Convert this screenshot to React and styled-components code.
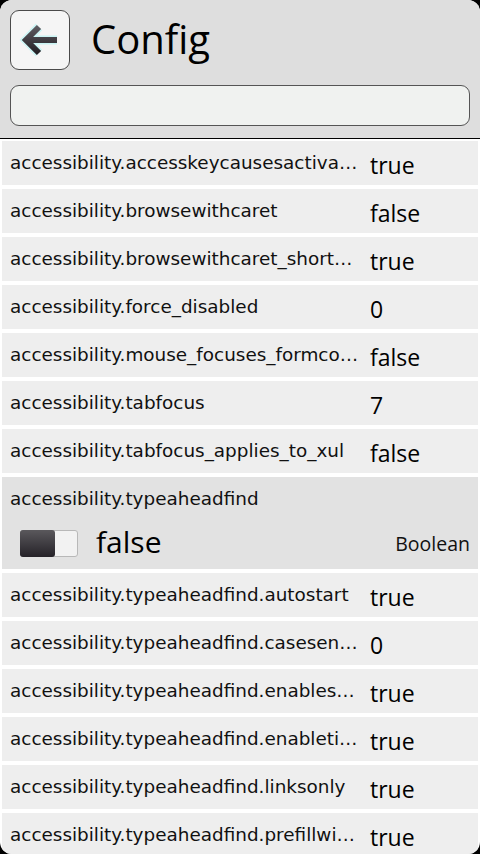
import React from 'react';
import styled, { createGlobalStyle } from 'styled-components';

const prefs = [
  { name: 'accessibility.accesskeycausesactivation', value: 'true' },
  { name: 'accessibility.browsewithcaret', value: 'false' },
  { name: 'accessibility.browsewithcaret_shortcut.enabled', value: 'true' },
  { name: 'accessibility.force_disabled', value: '0' },
  { name: 'accessibility.mouse_focuses_formcontrol', value: 'false' },
  { name: 'accessibility.tabfocus', value: '7' },
  { name: 'accessibility.tabfocus_applies_to_xul', value: 'false' },
  { name: 'accessibility.typeaheadfind', value: 'false', type: 'Boolean', open: true },
  { name: 'accessibility.typeaheadfind.autostart', value: 'true' },
  { name: 'accessibility.typeaheadfind.casesensitive', value: '0' },
  { name: 'accessibility.typeaheadfind.enablesound', value: 'true' },
  { name: 'accessibility.typeaheadfind.enabletimeout', value: 'true' },
  { name: 'accessibility.typeaheadfind.linksonly', value: 'true' },
  { name: 'accessibility.typeaheadfind.prefillwithselection', value: 'true' },
];

const GlobalStyle = createGlobalStyle`
  html, body {
    margin: 0;
    padding: 0;
    background: #000;
  }
  body {
    font-family: "DejaVu Sans", "Liberation Sans", sans-serif;
  }
`;

const Frame = styled.div`
  width: 480px;
  height: 854px;
  overflow: hidden;
  border-radius: 12px;
  background: #fff;
  display: flex;
  flex-direction: column;
`;

const Header = styled.div`
  background: #dedede;
  padding: 10px 10px 12px;
  border-bottom: 1px solid #000;
  display: flex;
  flex-direction: column;
  gap: 15px;
`;

const TitleBar = styled.div`
  display: flex;
  align-items: center;
  gap: 21px;
`;

const BackButton = styled.button`
  width: 60px;
  height: 60px;
  padding: 0;
  border: 1px solid #4a4a4a;
  border-radius: 9px;
  background: #f5f5f5;
  display: flex;
  align-items: center;
  justify-content: center;
`;

const Title = styled.h1`
  margin: 0;
  font-family: "Open Sans", "DejaVu Sans", sans-serif;
  font-weight: 400;
  font-size: 40px;
  color: #000;
  line-height: 1;
  padding-bottom: 2px;
`;

const Search = styled.input`
  height: 41px;
  box-sizing: border-box;
  border: 1px solid #555;
  border-radius: 9px;
  background: #f0f2f0;
  outline: none;
`;

const List = styled.div`
  padding: 2px;
  display: flex;
  flex-direction: column;
  gap: 4px;
`;

const Row = styled.div`
  background: ${p => (p.$open ? '#e2e2e2' : '#eeeeee')};
  display: flex;
  flex-direction: ${p => (p.$open ? 'column' : 'row')};
  align-items: ${p => (p.$open ? 'stretch' : 'center')};
  height: ${p => (p.$open ? '92px' : '44px')};
  padding: ${p => (p.$open ? '11px 8px 0' : '1px 0 0 8px')};
  box-sizing: border-box;
`;

const Key = styled.div`
  flex: ${p => (p.$open ? 'none' : '1')};
  min-width: 0;
  font-size: 18.4px;
  line-height: 22px;
  color: #111;
  white-space: nowrap;
  overflow: hidden;
  text-overflow: ellipsis;
  padding-bottom: 2px;
`;

const Value = styled.div`
  width: 108px;
  flex-shrink: 0;
  margin-left: 10px;
  font-family: "Open Sans", "DejaVu Sans", sans-serif;
  font-size: 23px;
  color: #000;
  padding-top: 3px;
`;

const EditLine = styled.div`
  display: flex;
  align-items: center;
  height: 30px;
  margin-top: 16px;
  padding-left: 10px;
`;

const Toggle = styled.div`
  width: 58px;
  height: 27px;
  box-sizing: border-box;
  border: 1px solid #b8b8b8;
  border-radius: 3px;
  background: #f2f2f2;
  display: flex;
`;

const Knob = styled.div`
  width: 35px;
  margin: -1px;
  border-radius: 3px;
  background: linear-gradient(#5a585c, #252228);
`;

const BigValue = styled.div`
  font-family: "Open Sans", "DejaVu Sans", sans-serif;
  font-size: 30px;
  line-height: 30px;
  color: #000;
  margin-left: 18px;
  flex: 1;
  padding-bottom: 2px;
`;

const TypeLabel = styled.div`
  font-family: "Open Sans", "DejaVu Sans", sans-serif;
  font-size: 19.5px;
  color: #111;
`;

const BackArrow = () => (
  <svg width="42" height="36" viewBox="0 0 42 36">
    <defs>
      <linearGradient id="ag" x1="0" y1="0" x2="0" y2="1">
        <stop offset="0" stopColor="#5c5a60" />
        <stop offset="1" stopColor="#242126" />
      </linearGradient>
    </defs>
    <path
      d="M20 5 L7 18 L20 31 M8 18 H38"
      fill="none"
      stroke="#9ff4f4"
      strokeWidth="9"
      strokeLinejoin="miter"
      opacity="0.5"
    />
    <path
      d="M20 5 L7 18 L20 31 M8 18 H38"
      fill="none"
      stroke="url(#ag)"
      strokeWidth="6"
      strokeLinejoin="miter"
    />
  </svg>
);

export default function App() {
  return (
    <>
      <GlobalStyle />
      <Frame>
        <Header>
          <TitleBar>
            <BackButton>
              <BackArrow />
            </BackButton>
            <Title>Config</Title>
          </TitleBar>
          <Search />
        </Header>
        <List>
          {prefs.map(p =>
            p.open ? (
              <Row key={p.name} $open>
                <Key $open>{p.name}</Key>
                <EditLine>
                  <Toggle>
                    <Knob />
                  </Toggle>
                  <BigValue>{p.value}</BigValue>
                  <TypeLabel>{p.type}</TypeLabel>
                </EditLine>
              </Row>
            ) : (
              <Row key={p.name}>
                <Key>{p.name}</Key>
                <Value>{p.value}</Value>
              </Row>
            )
          )}
        </List>
      </Frame>
    </>
  );
}
